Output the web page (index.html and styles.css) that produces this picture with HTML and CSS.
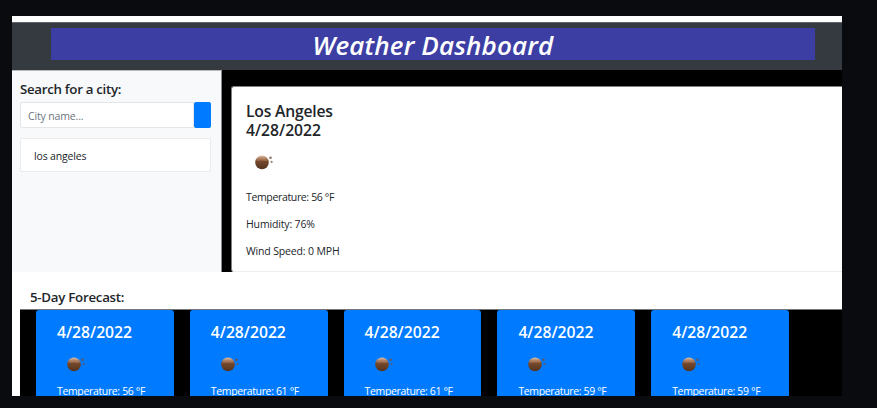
FILE: index.html
```
<!DOCTYPE html>
<html lang="en">
<head>
<meta charset="utf-8">
<title>Weather Dashboard</title>
<link rel="stylesheet" href="styles.css">
</head>
<body>
<svg class="defs" width="0" height="0" aria-hidden="true">
  <defs>
    <linearGradient id="ball" x1="0" y1="0" x2="0" y2="1">
      <stop offset="0" stop-color="#dcc0ac"/>
      <stop offset=".2" stop-color="#b58567"/>
      <stop offset=".42" stop-color="#76482c"/>
      <stop offset="1" stop-color="#54341f"/>
    </linearGradient>
    <symbol id="mist" viewBox="0 0 20 16">
      <circle cx="7" cy="8.4" r="6.8" fill="url(#ball)"/>
      <path d="M2.4 6.4Q7 5.2 12 6.4" fill="none" stroke="#c99570" stroke-width=".6" opacity=".6"/>
      <circle cx="15.5" cy="3.8" r="1.3" fill="#76503d" opacity=".8"/>
      <circle cx="16.6" cy="7.9" r="1.1" fill="#76503d" opacity=".7"/>
    </symbol>
  </defs>
</svg>
<div class="page">
  <header class="header"><h1 class="banner">Weather Dashboard</h1></header>
  <div class="main">
    <aside class="search">
      <h2 class="label">Search for a city:</h2>
      <form class="field"><input class="input" type="text" placeholder="City name..." aria-label="City name"><button class="submit" type="button" aria-label="Search"></button></form>
      <div class="history">los angeles</div>
    </aside>
    <section class="current">
      <h2 class="place"><span class="city">Los Angeles</span><br>4/28/2022</h2>
      <svg class="icon"><use href="#mist"/></svg>
      <p class="stat temp">Temperature: 56 °F</p>
      <p class="stat">Humidity: 76%</p>
      <p class="stat">Wind Speed: 0 MPH</p>
    </section>
  </div>
  <section class="forecast">
    <h2 class="forecast-title">5-Day Forecast:</h2>
    <div class="days">
      <article class="day"><h3 class="date">4/28/2022</h3><svg class="icon"><use href="#mist"/></svg><p class="temp">Temperature: 56 °F</p></article>
      <article class="day"><h3 class="date">4/28/2022</h3><svg class="icon"><use href="#mist"/></svg><p class="temp">Temperature: 61 °F</p></article>
      <article class="day"><h3 class="date">4/28/2022</h3><svg class="icon"><use href="#mist"/></svg><p class="temp">Temperature: 61 °F</p></article>
      <article class="day"><h3 class="date">4/28/2022</h3><svg class="icon"><use href="#mist"/></svg><p class="temp">Temperature: 59 °F</p></article>
      <article class="day"><h3 class="date">4/28/2022</h3><svg class="icon"><use href="#mist"/></svg><p class="temp">Temperature: 59 °F</p></article>
    </div>
  </section>
</div>
</body>
</html>
```
FILE: styles.css
```
* { box-sizing: border-box; }
html, body { height: 100%; overflow: hidden; }
body {
  margin: 0;
  padding: 16px 35px 12px 12px;
  background: #0a0b0f;
  color: #212529;
  font: 400 10.5px/16px "Open Sans", "Noto Sans", sans-serif;
  letter-spacing: -.15px;
}
h1, h2, h3, p { margin: 0; }
.defs { position: absolute; }
.page { height: 380px; padding-top: 6px; background: #fff; overflow: hidden; }
.header {
  height: 48px;
  padding: 5px 27px 0 39px;
  background: #343a40;
  border-top: 1px solid #63676c;
}
.banner {
  height: 32px;
  background: #3d3ea4;
  color: #fff;
  font: italic 600 26px/35px "Open Sans", "Noto Sans", sans-serif;
  letter-spacing: .15px;
  text-align: center;
}
.main { display: flex; height: 202px; background: #000; }
.search {
  width: 210px;
  padding: 10px 10px 0 8px;
  background: #f8f9fb;
  border-top: 1px solid #b6b8bc;
  border-right: 1px solid #8c8d8e;
}
.label { font-size: 13.3px; line-height: 17px; font-weight: 580; letter-spacing: -.3px; white-space: nowrap; }
.field { display: flex; height: 26px; margin-top: 4px; }
.input {
  width: 174px;
  border: 1px solid #e3e6e9;
  border-radius: 2px 0 0 2px;
  padding: 2px 7px 0;
  background: #fff;
  font: inherit;
  letter-spacing: inherit;
}
.input::placeholder { color: #6c757d; opacity: 1; }
.submit { width: 17.5px; padding: 0; border: 0; border-radius: 2px; background: #007bff; }
.history {
  height: 34px;
  margin-top: 10px;
  padding: 0 13px;
  background: #fff;
  border: 1px solid #e9ebed;
  border-radius: 2px;
  line-height: 34px;
}
.current {
  flex: 1;
  margin: 16px 0 0 9px;
  padding: 15px 14px 0;
  background: #fff;
  border: 1px solid #808080;
  border-right: 0;
  border-bottom-color: #ededed;
  border-radius: 3px 0 0 3px;
}
.place { font-size: 15.7px; line-height: 19px; font-weight: 580; letter-spacing: 0; }
.city { letter-spacing: -.2px; }
.icon { display: block; width: 20px; height: 16px; margin-left: 9px; }
.current .icon { margin-top: 14px; }
.stat { margin-top: 11px; }
.icon + .stat { margin-top: 19px; }
.forecast { padding-left: 8px; }
.forecast-title { height: 37px; padding: 15px 10px 0; font-size: 13.3px; line-height: 20px; font-weight: 580; letter-spacing: -.27px; }
.days {
  display: flex;
  gap: 16px;
  height: 90px;
  padding-left: 16px;
  background: #000;
  border-top: 1px solid #777;
}
.day {
  flex: 0 0 137.8px;
  padding: 12px 21px 0;
  background: #007bff;
  border-radius: 3px 3px 0 0;
  color: #fff;
}
.date { font-size: 15.7px; line-height: 20px; font-weight: 580; letter-spacing: 0; }
.day .icon { margin: 14px 0 0 10px; }
.temp { letter-spacing: -.35px; white-space: nowrap; }
.day .temp { margin-top: 11px; }
```
